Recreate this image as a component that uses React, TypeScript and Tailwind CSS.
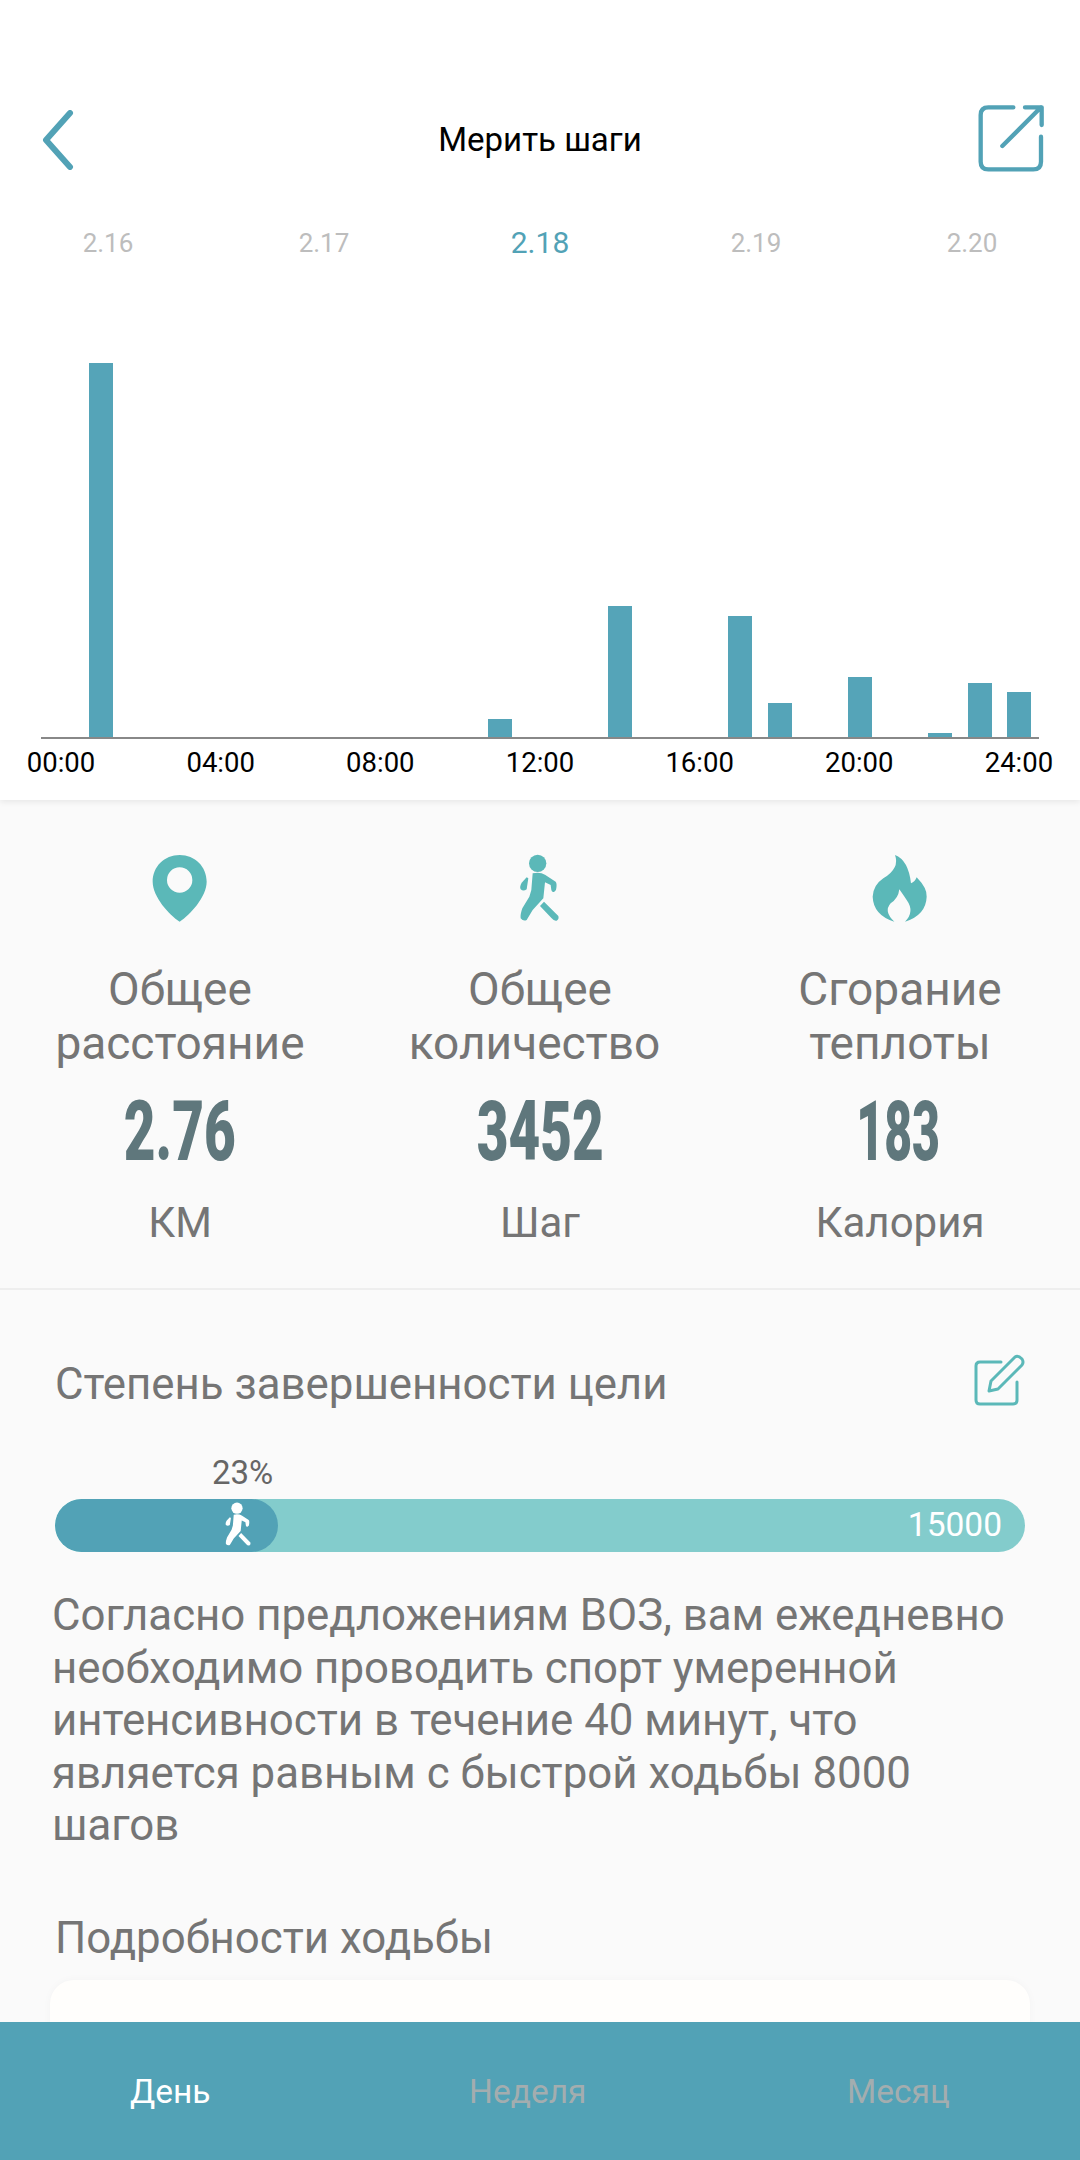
import { ReactNode } from 'react';

const HOURS: Record<number, number> = { 1: 374, 11: 18, 14: 131, 17: 121, 18: 34, 20: 60, 22: 4, 23: 54, 24: 45 };
const AXIS = ['00:00', '04:00', '08:00', '12:00', '16:00', '20:00', '24:00'];
const DATES = ['2.16', '2.17', '2.18', '2.19', '2.20'];

function WalkerIcon({ className }: { className: string }) {
    return (
        <svg viewBox="0 0 300 300" fill="currentColor" className={className}>
            <circle cx="143" cy="70" r="26" />
            <path d="M128 100 Q150 95 165 104 L197 125 Q202 130 198 150 L193 155 Q186 158 184 150 L182 135 L165 127 L160 175 L128 210 L110 240 Q100 245 92 235 Q90 225 97 205 L118 170 L124 150 Z" />
            <path d="M110 112 L115 115 L110 148 Q100 155 92 148 Q88 140 95 128 Z" />
            <path d="M162 185 L205 228 Q208 238 200 242 Q192 244 185 235 L150 198 Z" />
        </svg>
    );
}

function PinIcon() {
    return (
        <svg viewBox="0 0 300 300" fill="currentColor" className="w-[100px] h-[100px] text-[#5bb8b8]">
            <path
                fillRule="evenodd"
                d="M149 45 C195 45 230 80 230 125 C230 170 180 225 149 245 C118 225 68 170 68 125 C68 80 103 45 149 45 Z M149 82 A38 38 0 1 0 149.01 158 A38 38 0 1 0 149 82 Z"
            />
        </svg>
    );
}

function FlameIcon() {
    return (
        <svg viewBox="0 0 300 300" fill="currentColor" className="w-[100px] h-[100px] text-[#5bb8b8]">
            <path d="M135 45 Q175 60 183 130 Q195 125 200 112 Q232 145 230 170 Q228 225 165 245 Q195 215 170 180 Q160 165 148 148 Q145 175 122 190 Q100 215 133 245 Q70 225 68 170 Q70 135 100 115 Q150 85 135 45 Z" />
        </svg>
    );
}

function Stat({ icon, label, value, unit, narrow }: { icon: ReactNode; label: ReactNode[]; value: string; unit: string; narrow?: boolean }) {
    return (
        <div className="flex flex-col items-center">
            {icon}
            <div className="mt-[22px] text-center text-[46px] leading-[54px] text-[#757575] whitespace-nowrap">
                {label.map((line, i) => (
                    <div key={i}>{line}</div>
                ))}
            </div>
            <div className={`mt-[22px] h-[80px] flex items-center font-black text-[83px] leading-[80px] text-[#5f777c] ${narrow ? 'scale-x-[0.58] -ml-[4px]' : 'scale-x-[0.66]'}`}>
                {value}
            </div>
            <div className="mt-[24px] text-[42px] leading-[54px] text-[#757575]">{unit}</div>
        </div>
    );
}

export default function App() {
    return (
        <div className="w-[1080px] h-[2160px] flex flex-col overflow-hidden bg-[#fafafa] font-['Roboto',sans-serif]">
            <div className="flex-1 min-h-0 overflow-hidden">
                {/* Chart */}
                <div className="h-[800px] bg-white shadow-[0_2px_6px_rgba(0,0,0,0.08)] relative">
                    <div className="pt-[100px] h-[180px] px-[30px] flex items-center">
                        <div className="w-[90px]">
                            <svg viewBox="0 0 36 60" className="ml-[8px] w-[36px] h-[60px] text-[#52a2b6]" fill="none" stroke="currentColor" strokeWidth="6" strokeLinecap="round" strokeLinejoin="round">
                                <polyline points="32,3 8,30 32,57" />
                            </svg>
                        </div>
                        <span className="flex-1 text-center text-[33px] leading-[40px] text-black">Мерить шаги</span>
                        <svg viewBox="0 0 270 270" className="w-[90px] h-[90px] mb-[10px] text-[#52a2b6]" fill="none" stroke="currentColor" strokeWidth="13" strokeLinecap="round" strokeLinejoin="round">
                            <path d="M160 52 H85 Q62 52 62 75 V215 Q62 238 85 238 H220 Q243 238 243 215 V140" />
                            <path d="M127 168 L243 52 M195 52 H245 V105" />
                        </svg>
                    </div>

                    <div className="mt-[43px] grid grid-cols-5 text-center">
                        {DATES.map((d) => (
                            <span key={d} className={d === '2.18' ? 'text-[30px] leading-[40px] text-[#52a2b6]' : 'text-[26px] leading-[40px] text-[#bdbdbd]'}>
                                {d}
                            </span>
                        ))}
                    </div>

                    <div className="mt-[100px] ml-[41px] w-[998px] h-[376px] flex items-end border-b-2 border-[#888888]">
                        {Array.from({ length: 25 }, (_, h) => (
                            <div key={h} className="w-[39.95px] shrink-0 flex justify-center">
                                {HOURS[h] ? <div className="w-[24px] bg-[#55a4b8]" style={{ height: HOURS[h] }} /> : null}
                            </div>
                        ))}
                    </div>

                    <div className="mt-[9px] px-[61px] flex justify-between">
                        {AXIS.map((t) => (
                            <div key={t} className="w-0 flex justify-center whitespace-nowrap text-[27.5px] leading-[30px] text-black">
                                {t}
                            </div>
                        ))}
                    </div>
                </div>

                {/* Totals */}
                <div className="h-[490px] pt-[40px] grid grid-cols-3 border-b-2 border-[#eeeeee]">
                    <Stat icon={<PinIcon />} label={['Общее', 'расстояние']} value="2.76" unit="КМ" />
                    <Stat
                        icon={<WalkerIcon className="w-[100px] h-[100px] text-[#5bb8b8]" />}
                        label={['Общее', <span className="pr-[11px]">количество</span>]}
                        value="3452"
                        unit="Шаг"
                    />
                    <Stat icon={<FlameIcon />} label={['Сгорание', 'теплоты']} value="183" unit="Калория" narrow />
                </div>

                {/* Goal */}
                <div className="px-[55px]">
                    <div className="mt-[50px] h-[88px] flex items-center justify-between">
                        <span className="text-[43.8px] leading-[60px] text-[#757575] whitespace-nowrap">Степень завершенности цели</span>
                        <svg viewBox="0 0 90 80" className="self-start w-[90px] h-[80px] -mr-[25px] text-[#5bb8b8]" fill="none" stroke="currentColor" strokeWidth="3" strokeLinecap="round" strokeLinejoin="round">
                            <path d="M41 22 H20 Q16 22 16 26 V60 Q16 64 20 64 H53 Q57 64 57 60 V42" />
                            <path d="M31 41 L55 17 Q58 15 62 19 Q64 22 62 25 L38 49 L29 51 Z" />
                        </svg>
                    </div>
                    <div className="mt-[25px] pl-[157px] text-[33px] leading-[40px] text-[#666666]">23%</div>
                    <div className="mt-[6px] h-[53px] rounded-full bg-[#83cccc] flex items-center justify-between overflow-hidden">
                        <div className="w-[223px] h-full rounded-full bg-[#52a2b6] flex items-center justify-end pr-[7px]">
                            <WalkerIcon className="w-[65px] h-[65px] shrink-0 text-white" />
                        </div>
                        <span className="pr-[23px] text-[33.5px] text-white">15000</span>
                    </div>
                    <p className="mt-[37px] -ml-[3px] text-[43.8px] leading-[52.5px] text-[#757575]">
                        Согласно предложениям ВОЗ, вам ежедневно необходимо проводить спорт умеренной интенсивности в течение 40 минут, что является равным с быстрой ходьбы 8000 шагов
                    </p>
                    <div className="mt-[56px] text-[43.8px] leading-[60px] text-[#757575]">Подробности ходьбы</div>
                    <div className="mt-[12px] -mx-[5px] h-[200px] rounded-[24px] bg-[#fffefc] shadow-[0_0_8px_rgba(0,0,0,0.03)]" />
                </div>
            </div>

            {/* Tabs */}
            <div className="h-[138px] pt-[2px] shrink-0 bg-[#52a2b6] grid grid-cols-3 items-center text-[33.5px]">
                <span className="pl-[130px] text-white">День</span>
                <span className="pl-[109px] text-[#a3adaf]">Неделя</span>
                <span className="pl-[127px] text-[#a3adaf]">Месяц</span>
            </div>
        </div>
    );
}
